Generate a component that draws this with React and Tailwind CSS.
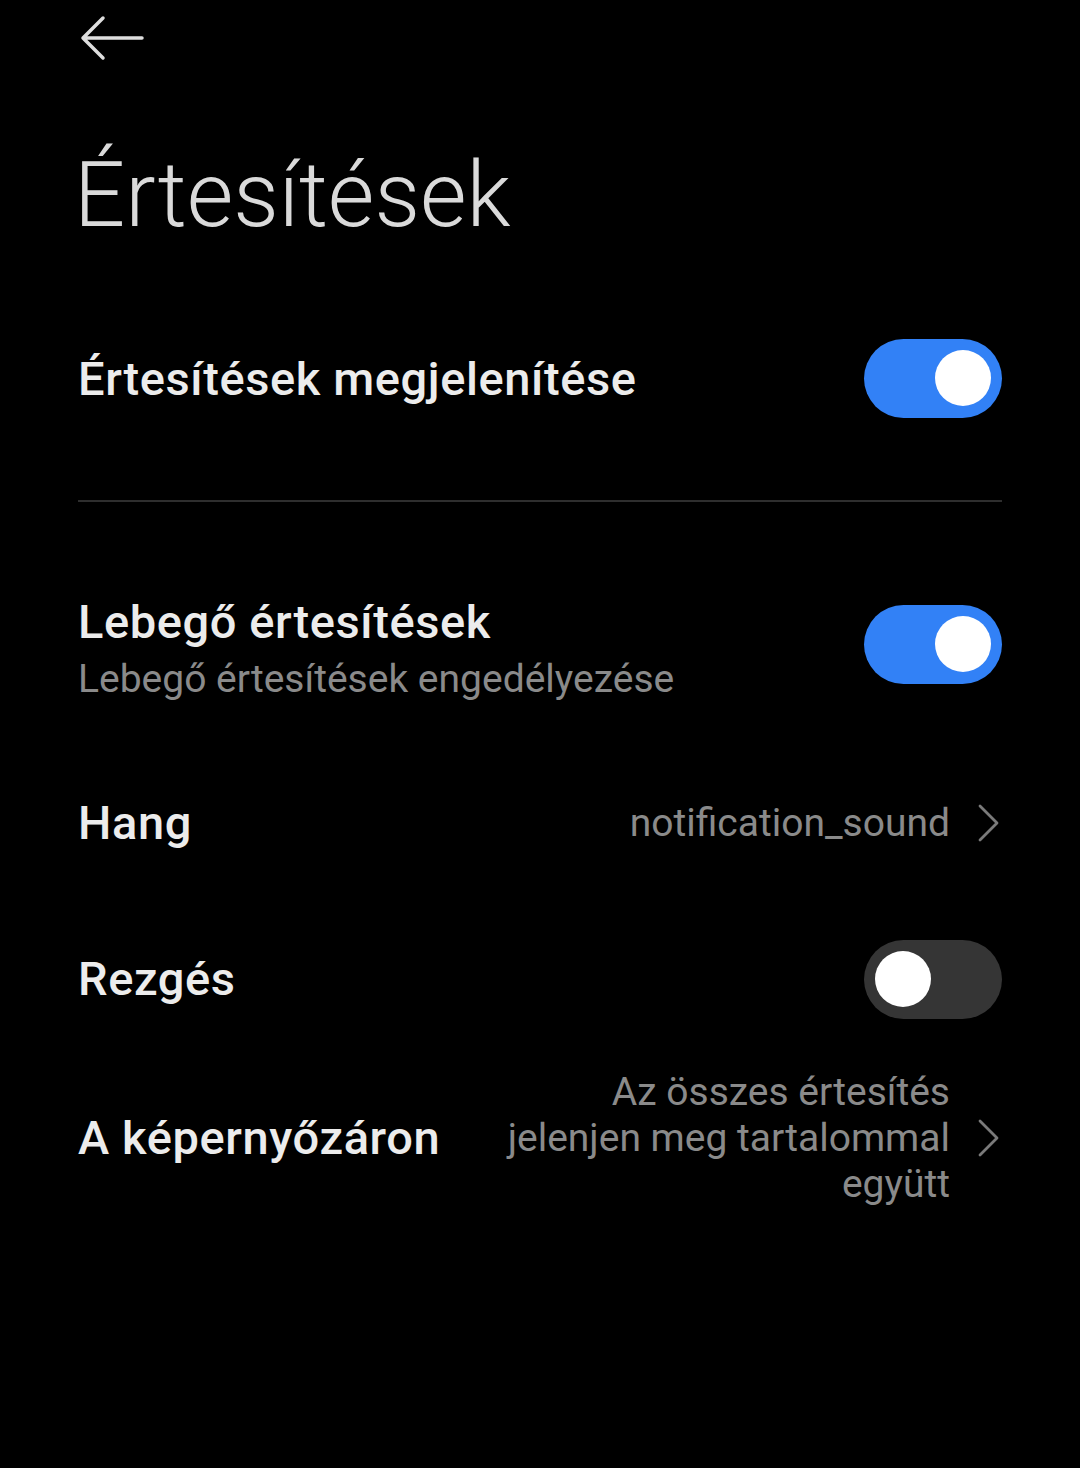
import React from "react";

const font = { fontFamily: "Roboto, 'Noto Sans', sans-serif" };

function Toggle({ on }) {
  return (
    <div
      className={
        "relative w-[138px] h-[79px] rounded-full shrink-0 " +
        (on ? "bg-[#3281f6]" : "bg-[#353535]")
      }
    >
      <div
        className={
          "absolute top-[11.5px] w-[56px] h-[56px] rounded-full bg-white " +
          (on ? "right-[11px]" : "left-[11px]")
        }
      />
    </div>
  );
}

function Chevron() {
  return (
    <svg width="26" height="40" viewBox="0 0 26 40" className="shrink-0">
      <path
        d="M4 3 L21 20 L4 37"
        fill="none"
        stroke="#7a7a7a"
        strokeWidth="2.8"
        strokeLinecap="round"
        strokeLinejoin="round"
      />
    </svg>
  );
}

const label = "text-[47px] leading-[52px] font-medium text-[#ececec] tracking-[0.6px]";
const value = "text-[39px] leading-[46px] text-[#8a8a8a]";

export default function App() {
  return (
    <div className="w-[1080px] h-[1468px] bg-black overflow-hidden" style={font}>
      {/* header */}
      <div className="h-[76px] flex items-center pl-[80px]">
        <svg width="64" height="46" viewBox="0 0 64 46">
          <path
            d="M62 23 H3 M23 3 L3 23 L23 43"
            fill="none"
            stroke="#dedede"
            strokeWidth="3.5"
            strokeLinecap="round"
            strokeLinejoin="round"
          />
        </svg>
      </div>

      {/* title */}
      <div className="pl-[74px] mt-[76px] text-[90px] leading-[88px] font-light text-[#dadada]">
        Értesítések
      </div>

      <div className="px-[78px]">
        {/* row 1 */}
        <div className="mt-[60px] h-[156px] flex items-center justify-between">
          <div className={label + " pt-[2px]"}>Értesítések megjelenítése</div>
          <Toggle on />
        </div>

        <div className="mt-[44px] h-[2px] bg-[#2e2e2e]" />

        {/* row 2 */}
        <div className="mt-[52px] h-[180px] flex items-center justify-between">
          <div className="flex flex-col pt-[10px]">
            <div className={label}>Lebegő értesítések</div>
            <div className="mt-[8px] text-[39px] leading-[46px] text-[#8a8a8a]">
              Lebegő értesítések engedélyezése
            </div>
          </div>
          <Toggle on />
        </div>

        {/* Hang */}
        <div className="h-[178px] flex items-center justify-between">
          <div className={label}>Hang</div>
          <div className="flex items-center gap-[26px]">
            <div className={value}>notification_sound</div>
            <Chevron />
          </div>
        </div>

        {/* Rezgés */}
        <div className="h-[134px] flex items-center justify-between">
          <div className={label}>Rezgés</div>
          <Toggle on={false} />
        </div>

        {/* Lock screen */}
        <div className="h-[184px] flex items-center justify-between">
          <div className={label}>A képernyőzáron</div>
          <div className="flex items-center gap-[26px]">
            <div className={value + " text-right"}>
              <div>Az összes értesítés</div>
              <div>jelenjen meg tartalommal</div>
              <div>együtt</div>
            </div>
            <Chevron />
          </div>
        </div>
      </div>
    </div>
  );
}
